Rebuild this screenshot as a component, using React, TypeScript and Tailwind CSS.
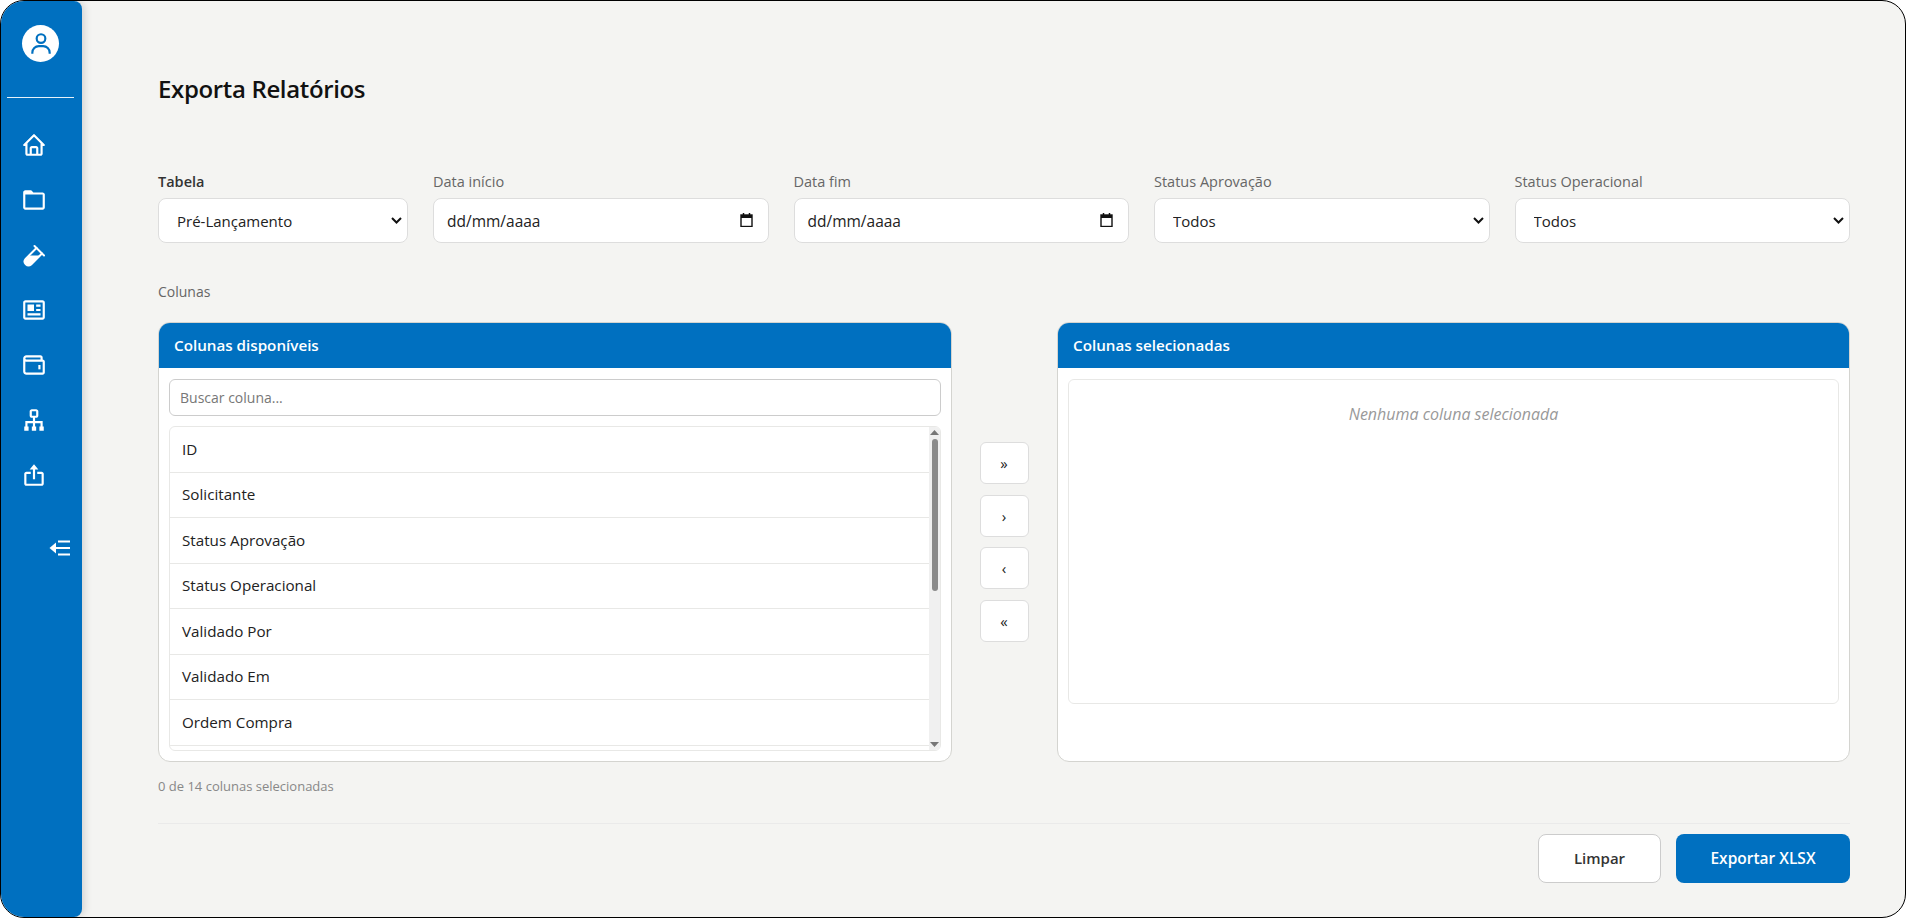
import React from 'react'
import { BiHome, BiFolder, BiNews, BiWallet, BiSitemap, BiExport, BiUser } from 'react-icons/bi'

const TestTube = ({ size }: { size: number }) => (
    <svg width={size} height={size} viewBox="0 0 26 26" fill="none" stroke="currentColor" strokeWidth="2" strokeLinecap="round">
        <path d="M13.5 4 23 13.5" />
        <path d="M15.5 6 4.6 16.9a3.9 3.9 0 0 0 5.5 5.5L21 11.5" />
        <path d="M8 13.5h10.9l-8.8 8.9a3.9 3.9 0 0 1-5.5-5.5z" fill="currentColor" stroke="none" />
    </svg>
)

const navIcons = [BiHome, BiFolder, TestTube, BiNews, BiWallet, BiSitemap, BiExport]
const colunas = ['ID', 'Solicitante', 'Status Aprovação', 'Status Operacional', 'Validado Por', 'Validado Em', 'Ordem Compra']

const Sidebar = () => (
    <aside className="w-[81px] shrink-0 bg-[#0070c0] rounded-tr-lg rounded-br-lg shadow-[2px_0_8px_rgba(0,0,0,0.15)] z-10 flex flex-col">
        <div className="h-[97px] border-b border-white/90 ml-[6px] mr-[8px] flex justify-center pt-[24px]">
            <div className="w-[37px] h-[37px] rounded-full bg-white flex items-center justify-center text-[#0070c0]">
                <BiUser size={26} />
            </div>
        </div>
        <nav className="flex flex-col pt-[34px] pl-[20px] gap-[29px] text-white">
            {navIcons.map((Icon, i) => (
                <Icon key={i} size={26} />
            ))}
        </nav>
        <div className="flex justify-end pr-[12px] mt-[52px]">
            <svg width="21" height="16" viewBox="0 0 21 16" fill="none" stroke="white" strokeWidth="2">
                <path d="M9 1.5h12M3 8h18M9 14.5h12" />
                <path d="M7 2.5 .5 8 7 13.5z" fill="white" stroke="none" />
            </svg>
        </div>
    </aside>
)

const Field = ({ label, bold, children }: { label: string; bold?: boolean; children: React.ReactNode }) => (
    <div>
        <div className={bold ? 'text-[14.5px] leading-[19px] font-semibold text-[#333] mb-[7px]' : 'text-[14.5px] leading-[20px] font-medium text-[#666] mb-[6px]'}>{label}</div>
        {children}
    </div>
)

const Select = ({ value }: { value: string }) => (
    <div className="relative">
        <select defaultValue={value} className="appearance-none w-full h-[45px] pl-[18px] pt-[2px] bg-white border border-[#ddd] rounded-lg text-[15px] text-[#222]">
            <option>{value}</option>
        </select>
        <svg width="11" height="7" viewBox="0 0 11 7" fill="none" stroke="#111" strokeWidth="2" className="absolute right-[6px] top-[19px] pointer-events-none">
            <path d="M1 1l4.5 4.5L10 1" />
        </svg>
    </div>
)

const DateBox = () => (
    <div className="h-[45px] bg-white border border-[#ddd] rounded-lg pl-[13px] pr-[15px] flex items-center justify-between text-[15.5px] text-[#222]">
        <span className="pt-[2px]">dd/mm/aaaa</span>
        <svg width="13" height="14" viewBox="0 0 13 14" fill="none" stroke="#111" className="-mt-[1px]">
            <rect x="1" y="2" width="11" height="11.5" strokeWidth="1.4" />
            <path d="M1 3.5h11" strokeWidth="3" />
            <path d="M3.5 0v2M9.5 0v2" strokeWidth="1.5" />
        </svg>
    </div>
)

const PanelHeader = ({ title }: { title: string }) => (
    <div className="h-[45px] bg-[#0070c0] px-[15px] flex items-center text-white text-[15.2px] font-semibold">{title}</div>
)

const MoveButton = ({ label }: { label: string }) => (
    <button className="w-[49px] h-[42px] bg-white border border-[#ddd] rounded-md text-[15px] text-[#222]">{label}</button>
)

const App = () => {
    return (
        <div className="w-[1906px] h-[918px] bg-white font-['Open_Sans',sans-serif]">
            <div className="w-full h-full border border-black rounded-[24px] overflow-hidden bg-[#f4f4f2] flex">
                <Sidebar />
                <main className="flex-1 pl-[76px] pr-[55px] flex flex-col">
                    <h1 className="mt-[71px] text-[24px] leading-[34px] font-semibold tracking-[-0.35px] text-[#111]">Exporta Relatórios</h1>

                    <div className="mt-[66px] grid grid-cols-[250px_1fr_1fr_1fr_1fr] gap-x-[25px]">
                        <Field label="Tabela" bold><Select value="Pré-Lançamento" /></Field>
                        <Field label="Data início"><DateBox /></Field>
                        <Field label="Data fim"><DateBox /></Field>
                        <Field label="Status Aprovação"><Select value="Todos" /></Field>
                        <Field label="Status Operacional"><Select value="Todos" /></Field>
                    </div>

                    <div className="mt-[40px] text-[14px] leading-[18px] font-medium text-[#666]">Colunas</div>

                    <div className="mt-[21px] h-[440px] grid grid-cols-[794px_105px_1fr]">
                        <div className="bg-white border border-[#d4d4d0] rounded-xl overflow-hidden flex flex-col">
                            <PanelHeader title="Colunas disponíveis" />
                            <div className="flex-1 min-h-0 px-[10px] pt-[11px] pb-[10px] flex flex-col gap-[10px]">
                                <div className="h-[37px] border border-[#ccc] rounded-md px-[10px] flex items-center text-[14px] text-[#777]">Buscar coluna...</div>
                                <div className="flex-1 min-h-0 border border-[#e8e8e6] rounded-md overflow-hidden flex">
                                    <ul className="flex-1">
                                        {colunas.map(c => (
                                            <li key={c} className="h-[45.5px] border-b border-[#e8e8e6] px-[12px] flex items-center text-[15.2px] text-[#222]">{c}</li>
                                        ))}
                                    </ul>
                                    <div className="w-[11px] bg-[#f0f0f0] flex flex-col items-center">
                                        <svg width="9" height="5" viewBox="0 0 9 5" className="mt-[3px] fill-[#777]"><path d="M4.5 0 9 5H0z" /></svg>
                                        <div className="mt-[4px] w-[6px] h-[152px] rounded-full bg-[#8a8a8a]" />
                                        <svg width="9" height="5" viewBox="0 0 9 5" className="mt-auto mb-[3px] fill-[#777]"><path d="M0 0h9L4.5 5z" /></svg>
                                    </div>
                                </div>
                            </div>
                        </div>

                        <div className="pr-[1px] flex flex-col items-center justify-center gap-[10.5px]">
                            <MoveButton label="»" />
                            <MoveButton label="›" />
                            <MoveButton label="‹" />
                            <MoveButton label="«" />
                        </div>

                        <div className="bg-white border border-[#d4d4d0] rounded-xl overflow-hidden flex flex-col">
                            <PanelHeader title="Colunas selecionadas" />
                            <div className="px-[10px] pt-[11px]">
                                <div className="h-[325px] border border-[#e8e8e6] rounded-md pt-[23px] text-center italic text-[16px] leading-[22px] text-[#999]">Nenhuma coluna selecionada</div>
                            </div>
                        </div>
                    </div>

                    <div className="mt-[15px] text-[13px] leading-[18px] text-[#888]">0 de 14 colunas selecionadas</div>

                    <div className="mt-[28px] border-t border-[#eaeaea] pt-[10px] flex justify-end gap-[15px]">
                        <button className="w-[123px] h-[49px] bg-white border border-[#ccc] rounded-lg text-[15px] font-semibold text-[#333]">Limpar</button>
                        <button className="w-[174px] h-[49px] bg-[#0070c0] rounded-lg text-[15.5px] font-semibold text-white">Exportar XLSX</button>
                    </div>
                </main>
            </div>
        </div>
    )
}

export default App
